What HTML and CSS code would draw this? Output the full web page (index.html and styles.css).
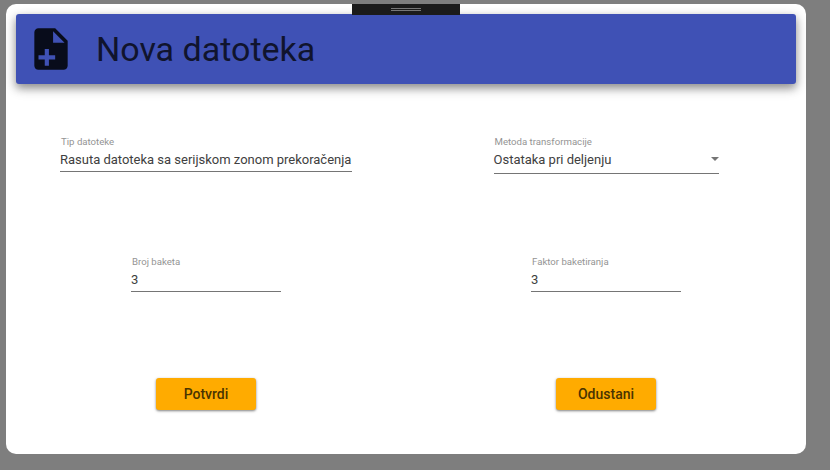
FILE: index.html
```html
<!DOCTYPE html>
<html lang="sr-Latn">
<head>
<meta charset="utf-8">
<title>Nova datoteka</title>
<link rel="stylesheet" href="styles.css">
</head>
<body>
<main class="dialog">
  <header class="toolbar">
    <svg class="toolbar-icon" viewBox="0 0 24 24" aria-hidden="true"><path d="M14 2H6c-1.100 0-1.990.9-1.990 2L4 20c0 1.100.890 2 1.990 2H18c1.100 0 2-.9 2-2V8l-6-6zm0 15h-3v3H9v-3H6v-2h3v-3h2v3h3v2zm-1-8V3.500L18.500 9H13z"/></svg>
    <h1 class="title">Nova datoteka</h1>
  </header>
  <form class="form">
    <div class="field field-type"><span class="label">Tip datoteke</span><span class="value">Rasuta datoteka sa serijskom zonom prekoračenja</span></div>
    <div class="field field-select"><span class="label">Metoda transformacije</span><span class="value">Ostataka pri deljenju<i class="arrow"></i></span></div>
    <div class="field field-number"><span class="label">Broj baketa</span><span class="value">3</span></div>
    <div class="field field-number"><span class="label">Faktor baketiranja</span><span class="value">3</span></div>
    <button class="button" type="button">Potvrdi</button>
    <button class="button" type="button">Odustani</button>
  </form>
</main>
<div class="handle"><span class="grip"></span></div>
</body>
</html>
```
FILE: styles.css
```css
* { box-sizing: border-box; }
body {
  margin: 0;
  height: 470px;
  padding: 4px 24px 16px 6px;
  overflow: hidden;
  background: #7e7e7e;
  font-family: Roboto, sans-serif;
}
.dialog {
  width: 800px;
  height: 450px;
  padding: 10px;
  border-radius: 10px;
  background: #fff;
}
.toolbar {
  display: flex;
  align-items: center;
  height: 70px;
  padding-left: 10px;
  border-radius: 3px;
  background: #3f51b5;
  box-shadow: 0 4px 8px rgba(0,0,0,.36), 0 4px 14px rgba(0,0,0,.16);
}
.toolbar-icon {
  width: 50px;
  height: 50px;
  fill: #080c1b;
}
.title {
  margin: 0 0 0 20px;
  font-size: 34px;
  line-height: 70px;
  font-weight: 400;
  white-space: nowrap;
  color: #10142d;
}
.form {
  display: grid;
  grid-template-columns: 400px 400px;
  grid-template-rows: 120px 120px 32px;
  justify-items: center;
  margin: 52px -10px 0;
}
.field {
  display: flex;
  flex-direction: column;
  align-self: start;
  height: 36px;
  border-bottom: 1px solid #757575;
}
.field-type { width: 292px; }
.field-select { width: 225px; height: 38px; }
.field-number { width: 150px; }
.label {
  height: 12px;
  padding-left: 1px;
  font-size: 9.65px;
  line-height: 12px;
  color: #949494;
}
.value {
  display: flex;
  align-items: center;
  justify-content: space-between;
  height: 23px;
  font-size: 13px;
  line-height: 23px;
  letter-spacing: -0.01px;
  white-space: nowrap;
  color: #404040;
}
.arrow {
  margin-top: -2px;
  border: 4px solid transparent;
  border-top-color: #757575;
  border-bottom: 0;
}
.button {
  width: 100px;
  height: 32px;
  margin-top: 2px;
  padding: 0;
  border: 0;
  border-radius: 3px;
  background: #ffab00;
  box-shadow: 0 1px 3px rgba(0,0,0,.35), 0 1px 2px rgba(0,0,0,.2);
  font: 500 14px/32px Roboto, sans-serif;
  color: #4a3400;
}
.handle {
  position: absolute;
  top: 4px;
  left: 352px;
  display: flex;
  justify-content: center;
  width: 108px;
  height: 11px;
  padding-top: 4px;
  background: #1b1b1b;
}
.grip {
  width: 30px;
  height: 3px;
  border: solid #777;
  border-width: 1px 0;
}
```
